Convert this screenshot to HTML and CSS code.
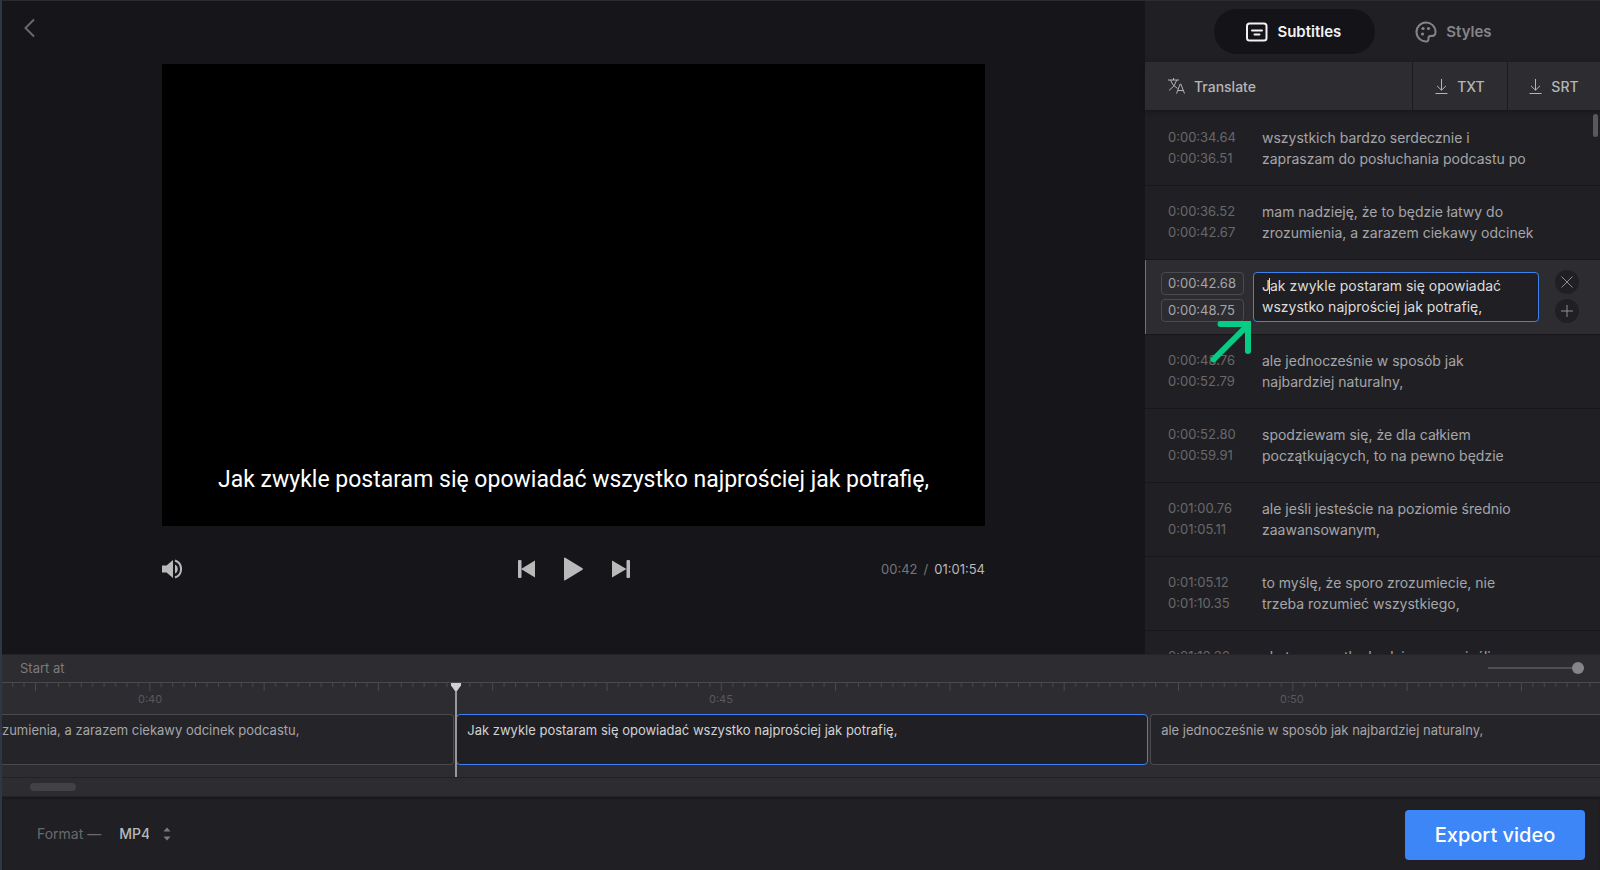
FILE: index.html
```html
<!DOCTYPE html>
<html lang="en">
<head>
<meta charset="utf-8">
<title>Subtitle editor</title>
<link rel="stylesheet" href="styles.css">
</head>
<body>
<div class="app">
  <div class="workspace">
    <main class="player">
      <button class="back" aria-label="Back"><svg width="12" height="20" viewBox="0 0 12 20"><path d="M11 1.500 2.500 10l8.500 8.500" /></svg></button>
      <div class="stage">
        <div class="video"><p class="caption">Jak zwykle postaram się opowiadać wszystko najprościej jak potrafię,</p></div>
        <div class="controls">
          <div class="volume">
            <button class="icon-btn" aria-label="Volume"><svg width="21" height="20" viewBox="0 0 21 20"><path d="M0 6.500h4.500L11 1v18l-6.500-5.500H0z"/><path d="M13 5.500a5 5 0 0 1 0 9z"/><path class="wave" d="M13 1.500a9 9 0 0 1 0 17"/></svg></button>
          </div>
          <div class="transport">
            <button class="icon-btn" aria-label="Previous"><svg width="18" height="20" viewBox="0 0 18 20"><rect x="0" y="1" width="3.500" height="18" rx="1"/><path d="M17 1.500v17L3 10z"/></svg></button>
            <button class="icon-btn" aria-label="Play"><svg width="20" height="24" viewBox="0 0 20 24"><path d="M0 1.500Q0 0 1.300.8L18.500 11.200q1 .8 0 1.600L1.300 23.200Q0 24 0 22.500z"/></svg></button>
            <button class="icon-btn" aria-label="Next"><svg width="18" height="20" viewBox="0 0 18 20"><rect x="14.500" y="1" width="3.500" height="18" rx="1"/><path d="M0 1.500v17L14.500 10z"/></svg></button>
          </div>
          <div class="clock"><span>00:42</span><span class="slash">/</span><span class="total">01:01:54</span></div>
        </div>
      </div>
    </main>
    <aside class="sidebar">
      <nav class="tabs">
        <button class="tab tab-on"><svg width="22" height="20" viewBox="0 0 22 20"><rect x="1" y="1.500" width="19.500" height="17" rx="2.500"/><path d="M6 8.500h10M8.500 12.500h5"/></svg>Subtitles</button>
        <button class="tab"><svg width="22" height="22" viewBox="0 0 22 22"><path d="M12 20.400A9.500 9.500 0 1 1 20.500 11q0 2.500-1.500 3.500-1 .5-3.500.5-2 0-2 2 0 3.400-1.500 3.400z"/><g class="dots"><circle cx="8" cy="7.500" r="1.600"/><circle cx="13.500" cy="7.500" r="1.600"/><circle cx="7.500" cy="13" r="1.600"/></g></svg>Styles</button>
      </nav>
      <div class="toolbar">
        <button class="tool tool-wide"><svg width="17" height="16" viewBox="0 0 17 16"><path d="M0 2h11M5.500 0v2M2.500 2q1.500 5.500 7 8.500M8.700 2Q7.500 8 1 12.500M8.500 15.500 12.200 6h.6l3.700 9.500M9.800 12.500h5.400"/></svg>Translate</button>
        <button class="tool"><svg width="13" height="15" viewBox="0 0 13 15"><path d="M6.500 0v11M2 6.800l4.500 4.400L11 6.800M.5 14.500h12"/></svg>TXT</button>
        <button class="tool"><svg width="13" height="15" viewBox="0 0 13 15"><path d="M6.500 0v11M2 6.800l4.500 4.400L11 6.800M.5 14.500h12"/></svg>SRT</button>
      </div>
      <div class="list">
        <div class="row"><div class="times">0:00:34.64<br>0:00:36.51</div><p class="line">wszystkich bardzo serdecznie i<br>zapraszam do posłuchania podcastu po</p></div>
        <div class="row"><div class="times">0:00:36.52<br>0:00:42.67</div><p class="line">mam nadzieję, że to będzie łatwy do<br>zrozumienia, a zarazem ciekawy odcinek</p></div>
        <div class="row row-on">
          <div class="edit-times">
            <input class="time" aria-label="Start time" value="0:00:42.68">
            <input class="time" aria-label="End time" value="0:00:48.75">
          </div>
          <div class="field">
            <textarea class="edit" aria-label="Subtitle text" rows="2">Jak zwykle postaram się opowiadać
wszystko najprościej jak potrafię,</textarea>
            <i class="caret"></i>
          </div>
          <div class="acts">
            <button class="round" aria-label="Delete"><svg width="24" height="24" viewBox="0 0 24 24"><path d="m6.500 6.500 11 11M17.500 6.500l-11 11"/></svg></button>
            <button class="round" aria-label="Add"><svg width="24" height="24" viewBox="0 0 24 24"><path d="M12 6v12M6 12h12"/></svg></button>
          </div>
          <svg class="pointer" width="42" height="43" viewBox="0 0 42 43"><path d="M3.500 39.500 38 5M10.500 4H38v27"/></svg>
        </div>
        <div class="row"><div class="times">0:00:48.76<br>0:00:52.79</div><p class="line">ale jednocześnie w sposób jak<br>najbardziej naturalny,</p></div>
        <div class="row"><div class="times">0:00:52.80<br>0:00:59.91</div><p class="line">spodziewam się, że dla całkiem<br>początkujących, to na pewno będzie</p></div>
        <div class="row"><div class="times">0:01:00.76<br>0:01:05.11</div><p class="line">ale jeśli jesteście na poziomie średnio<br>zaawansowanym,</p></div>
        <div class="row"><div class="times">0:01:05.12<br>0:01:10.35</div><p class="line">to myślę, że sporo zrozumiecie, nie<br>trzeba rozumieć wszystkiego,</p></div>
        <div class="row"><div class="times">0:01:10.36</div><p class="line">ale to wszystko będzie znane, jeśli</p></div>
        <i class="thumb"></i>
      </div>
    </aside>
  </div>
  <section class="timeline">
    <div class="zoombar"><span>Start at</span><input class="zoom" type="range" aria-label="Zoom" value="100"></div>
    <div class="tracks">
      <svg class="ruler" width="100%" height="8">
        <defs><pattern id="ticks" patternUnits="userSpaceOnUse" x="33" width="114.300" height="8">
          <path class="minor" d="M11.930 0v4M23.360 0v4M34.790 0v4M46.220 0v4M57.650 0v4M69.080 0v4M80.510 0v4M91.940 0v4M103.370 0v4"/><path class="major" d="M.5 0v8"/>
        </pattern></defs>
        <rect width="100%" height="8" fill="url(#ticks)"/>
      </svg>
      <div class="marks"><span>0:40</span><span>0:45</span><span>0:50</span></div>
      <div class="clips">
        <div class="clip clip-first">zumienia, a zarazem ciekawy odcinek podcastu,</div>
        <div class="clip clip-on">Jak zwykle postaram się opowiadać wszystko najprościej jak potrafię,</div>
        <div class="clip clip-last">ale jednocześnie w sposób jak najbardziej naturalny,</div>
      </div>
      <svg class="playhead" width="12" height="94" viewBox="0 0 12 94"><path class="stem" d="M6 4v90"/><path class="head" d="M1 0h10v2.500L7 8H5L1 2.500z"/></svg>
    </div>
    <div class="scroller"><i></i></div>
  </section>
  <footer class="footer">
    <label class="label" for="format">Format —</label>
    <select class="format" id="format"><option>MP4</option></select>
    <svg class="updown" width="8" height="14" viewBox="0 0 8 14"><path d="M.5 4.500 4 .5l3.500 4zM.5 9.500 4 13.500l3.500-4z"/></svg>
    <button class="export">Export video</button>
  </footer>
</div>
</body>
</html>
```
FILE: styles.css
```css
* { box-sizing: border-box; }
body { margin: 0; background: #202024; font-family: Inter, "Liberation Sans", sans-serif; font-size: 14px; color: #a5a5a8; }
p { margin: 0; }
svg { display: block; flex: none; overflow: visible; }
button { border: 0; padding: 0; margin: 0; background: none; font: inherit; color: inherit; cursor: pointer; }
input, textarea, select { margin: 0; font: inherit; color: inherit; outline: 0; }

.app { height: 100vh; display: flex; flex-direction: column; border-left: 2px solid #303644; border-top: 1px solid #2c2c30; overflow: hidden; }
.workspace { flex: 1; min-height: 0; display: flex; background: #16151a; }

.player { flex: 1; display: grid; grid-template-columns: 160px 1fr 160px; align-items: start; }
.back { justify-self: start; margin: 17px 0 0 21px; }
.back path { fill: none; stroke: #69696c; stroke-width: 2; }
.stage { padding-top: 63px; }
.video { aspect-ratio: 823 / 462; background: #000; display: flex; align-items: flex-end; justify-content: center; padding-bottom: 30px; }
.caption { font: 23px/32px Roboto, sans-serif; color: #fff; white-space: nowrap; }
.controls { display: grid; grid-template-columns: 1fr auto 1fr; align-items: center; height: 85px; }
.icon-btn { display: block; }
.icon-btn svg { fill: #b9b9ba; }
.icon-btn .wave { fill: none; stroke: #b9b9ba; stroke-width: 2; }
.transport { display: flex; align-items: center; gap: 28px; }
.clock { justify-self: end; display: flex; gap: 6px; font-size: 13px; color: #757578; }
.total { color: #b9b9ba; }

.sidebar { width: 455px; display: flex; flex-direction: column; background: #202024; }
.tabs { height: 61px; display: flex; align-items: center; justify-content: center; padding-right: 5px; }
.tab { height: 45px; display: flex; align-items: center; gap: 9px; padding: 0 34px 0 32px; border-radius: 23px; font-size: 15px; font-weight: 600; color: #858588; }
.tab + .tab { margin-left: 8px; }
.tab-on { background: #141317; color: #f2f2f3; }
.tab svg { fill: none; stroke: currentColor; stroke-width: 2; stroke-linecap: round; }
.tab .dots { fill: currentColor; stroke: none; }
.toolbar { height: 48px; display: flex; gap: 1px; background: #1b1a1e; box-shadow: 0 2px 4px #17161b; position: relative; }
.tool { display: flex; align-items: center; justify-content: center; gap: 9px; width: 94px; background: #2d2c31; font-weight: 500; color: #b5b5b7; }
.tool:last-child { width: 92px; }
.tool-wide { flex: 1; justify-content: flex-start; padding-left: 23px; }
.tool svg { fill: none; stroke: currentColor; stroke-width: 1; }

.list { flex: 1; min-height: 0; overflow: hidden; position: relative; padding-top: 2px; }
.row { height: 74px; display: flex; padding: 15px 0 0 23px; border-bottom: 1px solid #18171b; line-height: 21px; }
.times { width: 94px; font-size: 13px; color: #68686b; }
.line { white-space: nowrap; }
.row-on { height: 75px; position: relative; background: #2d2c31; padding: 12px 0 0 16px; box-shadow: inset 1px 0 #3c78dc; }
.edit-times { display: flex; flex-direction: column; gap: 4px; width: 83px; }
.time { width: 100%; height: 23px; padding: 0 6px 2px; border: 1px solid #4b4a50; border-radius: 4px; background: #2d2c31; font-size: 13px; }
.field { position: relative; margin-left: 9px; width: 286px; }
.edit { display: block; width: 100%; height: 50px; padding: 2px 8px; border: 1px solid #3c82f0; border-radius: 4px; background: #202024; color: #dcdcdd; line-height: 21px; resize: none; overflow: hidden; white-space: pre; }
.caret { position: absolute; left: 16px; top: 6px; width: 1px; height: 16px; background: #dcdcdd; }
.acts { margin: -2px 0 0 16px; display: flex; flex-direction: column; gap: 5px; }
.round { width: 24px; height: 24px; border-radius: 50%; background: #202024; }
.round path { stroke: #8d8d90; stroke-width: 1; fill: none; }
.pointer { position: absolute; left: 65px; top: 60px; z-index: 2; }
.pointer path { fill: none; stroke: #06cc86; stroke-width: 6; stroke-linecap: round; }
.thumb { position: absolute; right: 2px; top: 4px; width: 5px; height: 23px; border-radius: 3px; background: #59595d; }

.timeline { background: #2d2c31; border-top: 1px solid #242328; }
.zoombar { height: 28px; display: flex; align-items: center; justify-content: space-between; padding: 0 16px 1px 18px; font-size: 13px; color: #7b7b7e; border-bottom: 1px solid #4a494e; }
.zoom { appearance: none; width: 96px; height: 12px; background: linear-gradient(#4f4e53, #4f4e53) center / 100% 2px no-repeat; }
.zoom::-webkit-slider-thumb { appearance: none; width: 12px; height: 12px; border-radius: 50%; background: #858588; }
.tracks { position: relative; height: 94px; }
.ruler .minor, .ruler .major { stroke: #4a494e; }
.marks { display: flex; height: 23px; padding-left: 136px; font-size: 11px; line-height: 17px; color: #59595c; }
.marks span { flex: 0 0 571px; }
.clips { display: flex; gap: 2px; height: 51px; }
.clip { flex: none; padding: 7px 10px; border: 1px solid #4a494e; border-radius: 4px; background: #252428; font-size: 13px; line-height: 16px; white-space: nowrap; overflow: hidden; }
.clip-first { width: 28.300%; padding-left: 0; border-left: 0; border-radius: 0 4px 4px 0; }
.clip-on { width: 43.300%; border-color: #3c82f0; background: #202024; color: #d2d2d4; }
.clip-last { flex: 1; border-right: 0; border-radius: 4px 0 0 4px; }
.playhead { position: absolute; left: 448px; top: 0; }
.playhead .stem { stroke: #98989a; stroke-width: 2; }
.playhead .head { fill: #d0d0d1; }
.scroller { height: 20px; padding: 5px 28px; border-top: 1px solid #222126; border-bottom: 1px solid #242328; }
.scroller i { display: block; width: 46px; height: 8px; border-radius: 4px; background: #424146; }

.footer { height: 73px; display: flex; align-items: center; padding: 0 15px 0 35px; background: #202024; box-shadow: inset 0 2px 2px #1a191d; }
.label { color: #69696c; }
.format { appearance: none; border: 0; background: none; padding: 0; margin-left: 18px; width: 30px; color: #b9b9ba; font-weight: 500; }
.updown { fill: #7b7b7e; margin-left: 14px; }
.export { margin: 3px 0 0 auto; width: 180px; height: 50px; border-radius: 4px; background: #3c86f8; color: #fff; font-size: 20px; font-weight: 500; }
```
